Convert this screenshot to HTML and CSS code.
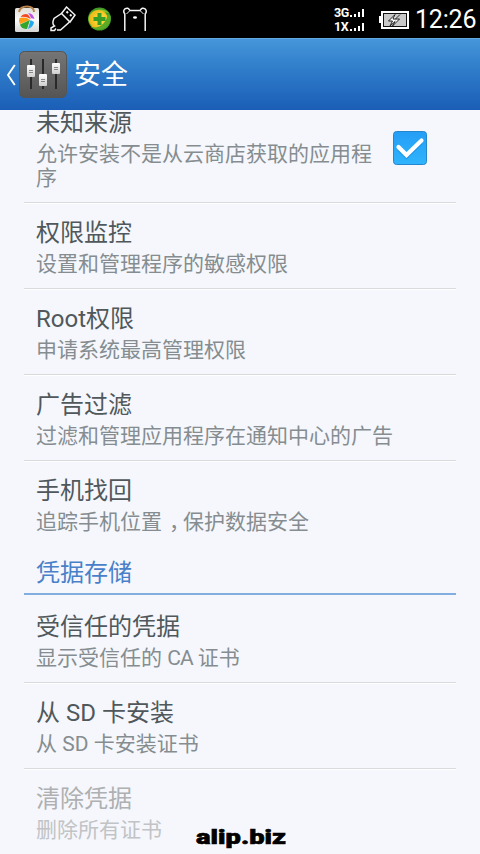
FILE: index.html
```html
<!DOCTYPE html>
<html lang="zh-CN">
<head>
<meta charset="utf-8">
<title>安全</title>
<link rel="stylesheet" href="styles.css">
</head>
<body>
<div class="screen">
  <div class="status">
    <svg class="notices" width="160" height="38" viewBox="0 0 160 38">
      <defs>
        <linearGradient id="bag" x1="0" y1="0" x2="0" y2="1"><stop offset="0" stop-color="#e0ded8"/><stop offset=".5" stop-color="#fafafa"/><stop offset="1" stop-color="#d5d5d5"/></linearGradient>
        <radialGradient id="ball" cx=".6" cy=".5" r=".6"><stop offset="0" stop-color="#ffe94a"/><stop offset="1" stop-color="#efb312"/></radialGradient>
      </defs>
      <rect x="15" y="8" width="24" height="24" rx="1.5" fill="url(#bag)"/>
      <path d="M19 12Q20 6.500 27 6.500T34 12" fill="none" stroke="#b9854f" stroke-width="2"/>
      <path d="M20.500 17Q23 13 28 14.500L31 19Q25 16 20.500 17Z" fill="#f04a20"/>
      <path d="M19.500 18Q26 16.500 30 20L20 24Q18 21 19.500 18Z" fill="#ff9d16"/>
      <path d="M30 20L27 29Q21 29 20 24.500Z" fill="#33a52b"/>
      <path d="M30.500 20L34 22Q33.500 27 28 29Z" fill="#24a6ee"/>
      <path d="M28 13Q33 13 34.500 19L31 18Q30 15 28 13Z" fill="#bf50e5"/>
      <g fill="none" stroke="#f4f4f4" stroke-width="1.500">
        <path d="M66.500 7L75 15L70 22L61.500 13.500Z"/>
        <path d="M61.500 13.500L54 18.500Q51.500 24 54.500 26L51 28V30.500H54.500L56 28.500M57 30H60.500L69.500 22"/>
        <path d="M66.500 11.500L68 13M70 14.500L71.500 16" stroke-width="2"/>
      </g>
      <circle cx="99.500" cy="19" r="11.500" fill="#429c25"/>
      <path d="M88.500 20C88 10 102 6 109 13C100 10 95 15 91 24Q89 22 88.500 20Z" fill="#8fc52a"/>
      <circle cx="98.500" cy="19.500" r="9.500" fill="url(#ball)"/>
      <path d="M110.500 16C112 26 101 34 91 27C100 29 106 23 108 14Z" fill="#5cab27"/>
      <path d="M97.500 13H101.500V17H105.500V21H101.500V25H97.500V21H93.500V17H97.500Z" fill="#389f26"/>
      <g fill="none" stroke="#f4f4f4" stroke-width="1.500">
        <path d="M124.800 31V14Q122.500 11 125 8.800Q128 7 130 10.500H140Q142 7 145 8.800Q147.500 11 145.200 14V31"/>
        <path d="M126.500 14L130 10.500M143.500 14L140 10.500" stroke-width="1"/>
      </g>
      <ellipse cx="135" cy="17.500" rx="2" ry="1.300" fill="#fff"/>
    </svg>
    <div class="indicators">
      <div class="networks">
        <div class="network"><span class="tech">3G</span><svg width="15" height="9" viewBox="0 0 15 9"><path d="M0 7H2V9H0ZM4 6H6V9H4ZM8 4H10V9H8ZM12 1H14V9H12Z" fill="#fff"/></svg></div>
        <div class="network"><span class="tech">1X</span><svg width="15" height="9" viewBox="0 0 15 9"><path d="M0 7H2V9H0ZM4 6H6V9H4ZM8 4H10V9H8ZM12 1H14V9H12Z" fill="#fff"/></svg></div>
      </div>
      <svg class="battery" width="31" height="18" viewBox="0 0 31 18">
        <path d="M2 0H30V18H2V12H0V5H2Z" fill="#fff"/>
        <rect x="4" y="2" width="24" height="14" fill="#111"/>
        <rect x="5" y="3" width="22" height="12" fill="#c9c9c9"/>
        <path d="M16 3.500L9.500 10H13.500L11 15L16 10.500M16 3.500L14 8H16.500M21 3.500L16.500 8H20.500L13.500 15L16 10.500" fill="#fff" stroke="#222" stroke-width="1"/>
      </svg>
      <div class="clock">12:26</div>
    </div>
  </div>

  <div class="bar">
    <svg class="back" width="10" height="22" viewBox="0 0 10 22"><path d="M8.800 1L2 11L8.800 21" fill="none" stroke="#fff" stroke-width="1.900"/></svg>
    <svg class="app" width="48" height="48" viewBox="0 0 48 48">
      <defs>
        <linearGradient id="tile" x1="0" y1="0" x2="0" y2="1"><stop offset="0" stop-color="#757575"/><stop offset="1" stop-color="#555"/></linearGradient>
        <linearGradient id="knob" x1="0" y1="0" x2="0" y2="1"><stop offset="0" stop-color="#fff"/><stop offset="1" stop-color="#cfcfcf"/></linearGradient>
      </defs>
      <rect x=".5" y=".5" width="47" height="46" rx="5" fill="url(#tile)" stroke="#555"/>
      <path d="M12 8V38M24 8V38M37 8V38" stroke="#292929" stroke-width="2"/>
      <g fill="url(#knob)">
        <rect x="8" y="14" width="8" height="12" rx="1"/>
        <rect x="20" y="23" width="8" height="12" rx="1"/>
        <rect x="33" y="12" width="8" height="11" rx="1"/>
      </g>
      <path d="M10 19.500H14M10 21.500H14M22 28.500H26M22 30.500H26M35 16.500H39M35 18.500H39" stroke="#888" stroke-width="1"/>
    </svg>
    <h1 class="heading">安全</h1>
  </div>

  <div class="viewport">
    <div class="list">
      <div class="row row-check">
        <div class="label">
          <div class="title">未知来源</div>
          <div class="summary">允许安装不是从云商店获取的应用程序</div>
        </div>
        <svg class="check" width="34" height="34" viewBox="0 0 34 34">
          <defs><linearGradient id="box" x1="0" y1="0" x2="0" y2="1"><stop offset="0" stop-color="#259df6"/><stop offset="1" stop-color="#2fb4fc"/></linearGradient></defs>
          <rect x=".5" y=".5" width="33" height="33" rx="3" fill="url(#box)" stroke="#2587cb"/>
          <path d="M6 18L13.500 25.500L28 11.500" fill="none" stroke="#1587d5" stroke-width="4.200" opacity=".6"/>
          <path d="M5.500 16L13.500 24L28.500 9.500" fill="none" stroke="#fff" stroke-width="4.200" stroke-linecap="round"/>
        </svg>
      </div>
      <div class="row"><div class="title">权限监控</div><div class="summary">设置和管理程序的敏感权限</div></div>
      <div class="row"><div class="title">Root权限</div><div class="summary">申请系统最高管理权限</div></div>
      <div class="row"><div class="title">广告过滤</div><div class="summary">过滤和管理应用程序在通知中心的广告</div></div>
      <div class="row row-last"><div class="title">手机找回</div><div class="summary">追踪手机位置<span class="comma">，</span>保护数据安全</div></div>
      <h2 class="section">凭据存储</h2>
      <div class="row"><div class="title">受信任的凭据</div><div class="summary">显示受信任的 <span class="latin">CA</span> 证书</div></div>
      <div class="row"><div class="title">从 SD 卡安装</div><div class="summary">从 SD 卡安装证书</div></div>
      <div class="row row-disabled"><div class="title">清除凭据</div><div class="summary">删除所有证书</div></div>
    </div>
  </div>
  <div class="mark">alip.biz</div>
</div>
</body>
</html>
```
FILE: styles.css
```css
* { box-sizing: border-box; }
body { margin: 0; font-family: Roboto, "Noto Sans CJK SC", sans-serif; }
svg { display: block; flex: none; }

.screen {
  position: relative;
  display: flex;
  flex-direction: column;
  width: 480px;
  height: 854px;
  overflow: hidden;
  background: #f5f7fc;
}

.status {
  display: flex;
  justify-content: space-between;
  height: 38px;
  flex: none;
  background: #000;
  color: #fff;
}
.indicators { display: flex; align-items: center; padding-right: 3px; }
.networks { display: flex; flex-direction: column; gap: 1px; width: 31px; margin-right: 14px; }
.network { display: flex; align-items: flex-end; height: 13px; }
.tech { width: 16px; font: bold 12.5px/13px Roboto, sans-serif; letter-spacing: -.3px; }
.network svg { margin-bottom: 2px; }
.battery { margin: 1px 5px 0 0; }
.clock { width: 62px; padding-top: 2px; font-size: 25px; line-height: 36px; letter-spacing: -.2px; white-space: nowrap; }

.bar {
  display: flex;
  align-items: center;
  height: 72px;
  flex: none;
  padding-left: 6px;
  background: linear-gradient(#4596d9, #2e7bc9 45%, #1b5eb7);
  border-top: 1px solid #63a8df;
}
.app { margin-left: 3px; }
.heading { margin: 1px 0 0 7px; font-size: 27px; line-height: 40px; font-weight: 400; color: #fff; }

.viewport { flex: 1; min-height: 0; overflow: hidden; padding: 0 24px; }
.list { margin-top: -17px; }
.row { height: 86px; padding: 14px 12px 0; border-bottom: 1px solid #d8dade; box-shadow: 0 1px #fff; }
.row-check { display: flex; justify-content: space-between; height: 110px; }
.label { width: 340px; }
.check { margin: 24px 17px 0 0; }
.row-last { border-bottom: 0; box-shadow: none; }
.title { font-size: 24px; line-height: 32px; color: #50585b; }
.summary { height: 24px; margin-top: 3px; font-size: 21px; line-height: 24px; color: #858d90; }
.comma { display: inline-block; width: 21px; height: 24px; overflow: hidden; text-indent: 7px; vertical-align: bottom; }
.section {
  height: 48px;
  margin: 0 0 2px;
  padding: 10px 12px 0;
  border-bottom: 2px solid #82aedf;
  font-size: 24px;
  line-height: 32px;
  font-weight: 400;
  color: #4a7fc9;
}
.latin { letter-spacing: -1px; }
.row-disabled { border-bottom: 0; box-shadow: none; }
.row-disabled .title { color: #aeb0b1; }
.row-disabled .summary { color: #c1c3c5; }

.mark {
  position: absolute;
  left: 196px;
  top: 825px;
  font: 900 21px/24px Roboto, sans-serif;
  color: #000;
  white-space: nowrap;
  transform: scaleX(1.3);
  transform-origin: left;
  -webkit-text-stroke: .6px #000;
  text-shadow: 1px 1px 1px #fff;
}
```
